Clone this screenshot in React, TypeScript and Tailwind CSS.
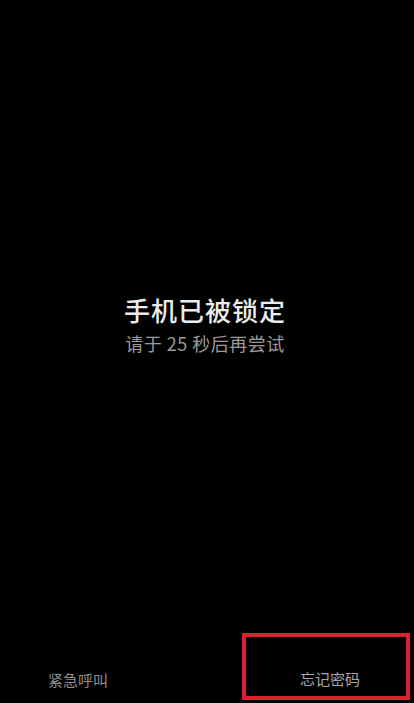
import React from 'react';

const font = { fontFamily: '"Noto Sans CJK SC", "Noto Sans", sans-serif' };

const App = () => {
  return (
    <div className="h-[703px] w-full bg-black flex flex-col overflow-hidden" style={font}>
      <div className="pt-[292px] flex flex-col items-center pr-[4px]">
        <h1 className="text-[26px] leading-[36px] font-medium text-[#ececec] tracking-[1px]">手机已被锁定</h1>
        <p className="mt-[3px] text-[18px] leading-[24px] text-[#9a9a9a] tracking-[0.5px]">请于 25 秒后再尝试</p>
      </div>
      <div className="flex-1" />
      <div className="flex items-stretch h-[67px] mb-[3px]">
        <button className="w-[156px] flex items-end justify-center pb-[10px] text-[15px] leading-[20px] text-[#8f8f8f]">
          紧急呼叫
        </button>
        <div className="flex-1" />
        <button className="w-[168px] mr-[4px] border-[4px] border-[#d8232d] flex items-end justify-center pl-[8px] pb-[7px] text-[15px] leading-[20px] text-[#a8a8a8]">
          忘记密码
        </button>
      </div>
    </div>
  );
};

export default App;
